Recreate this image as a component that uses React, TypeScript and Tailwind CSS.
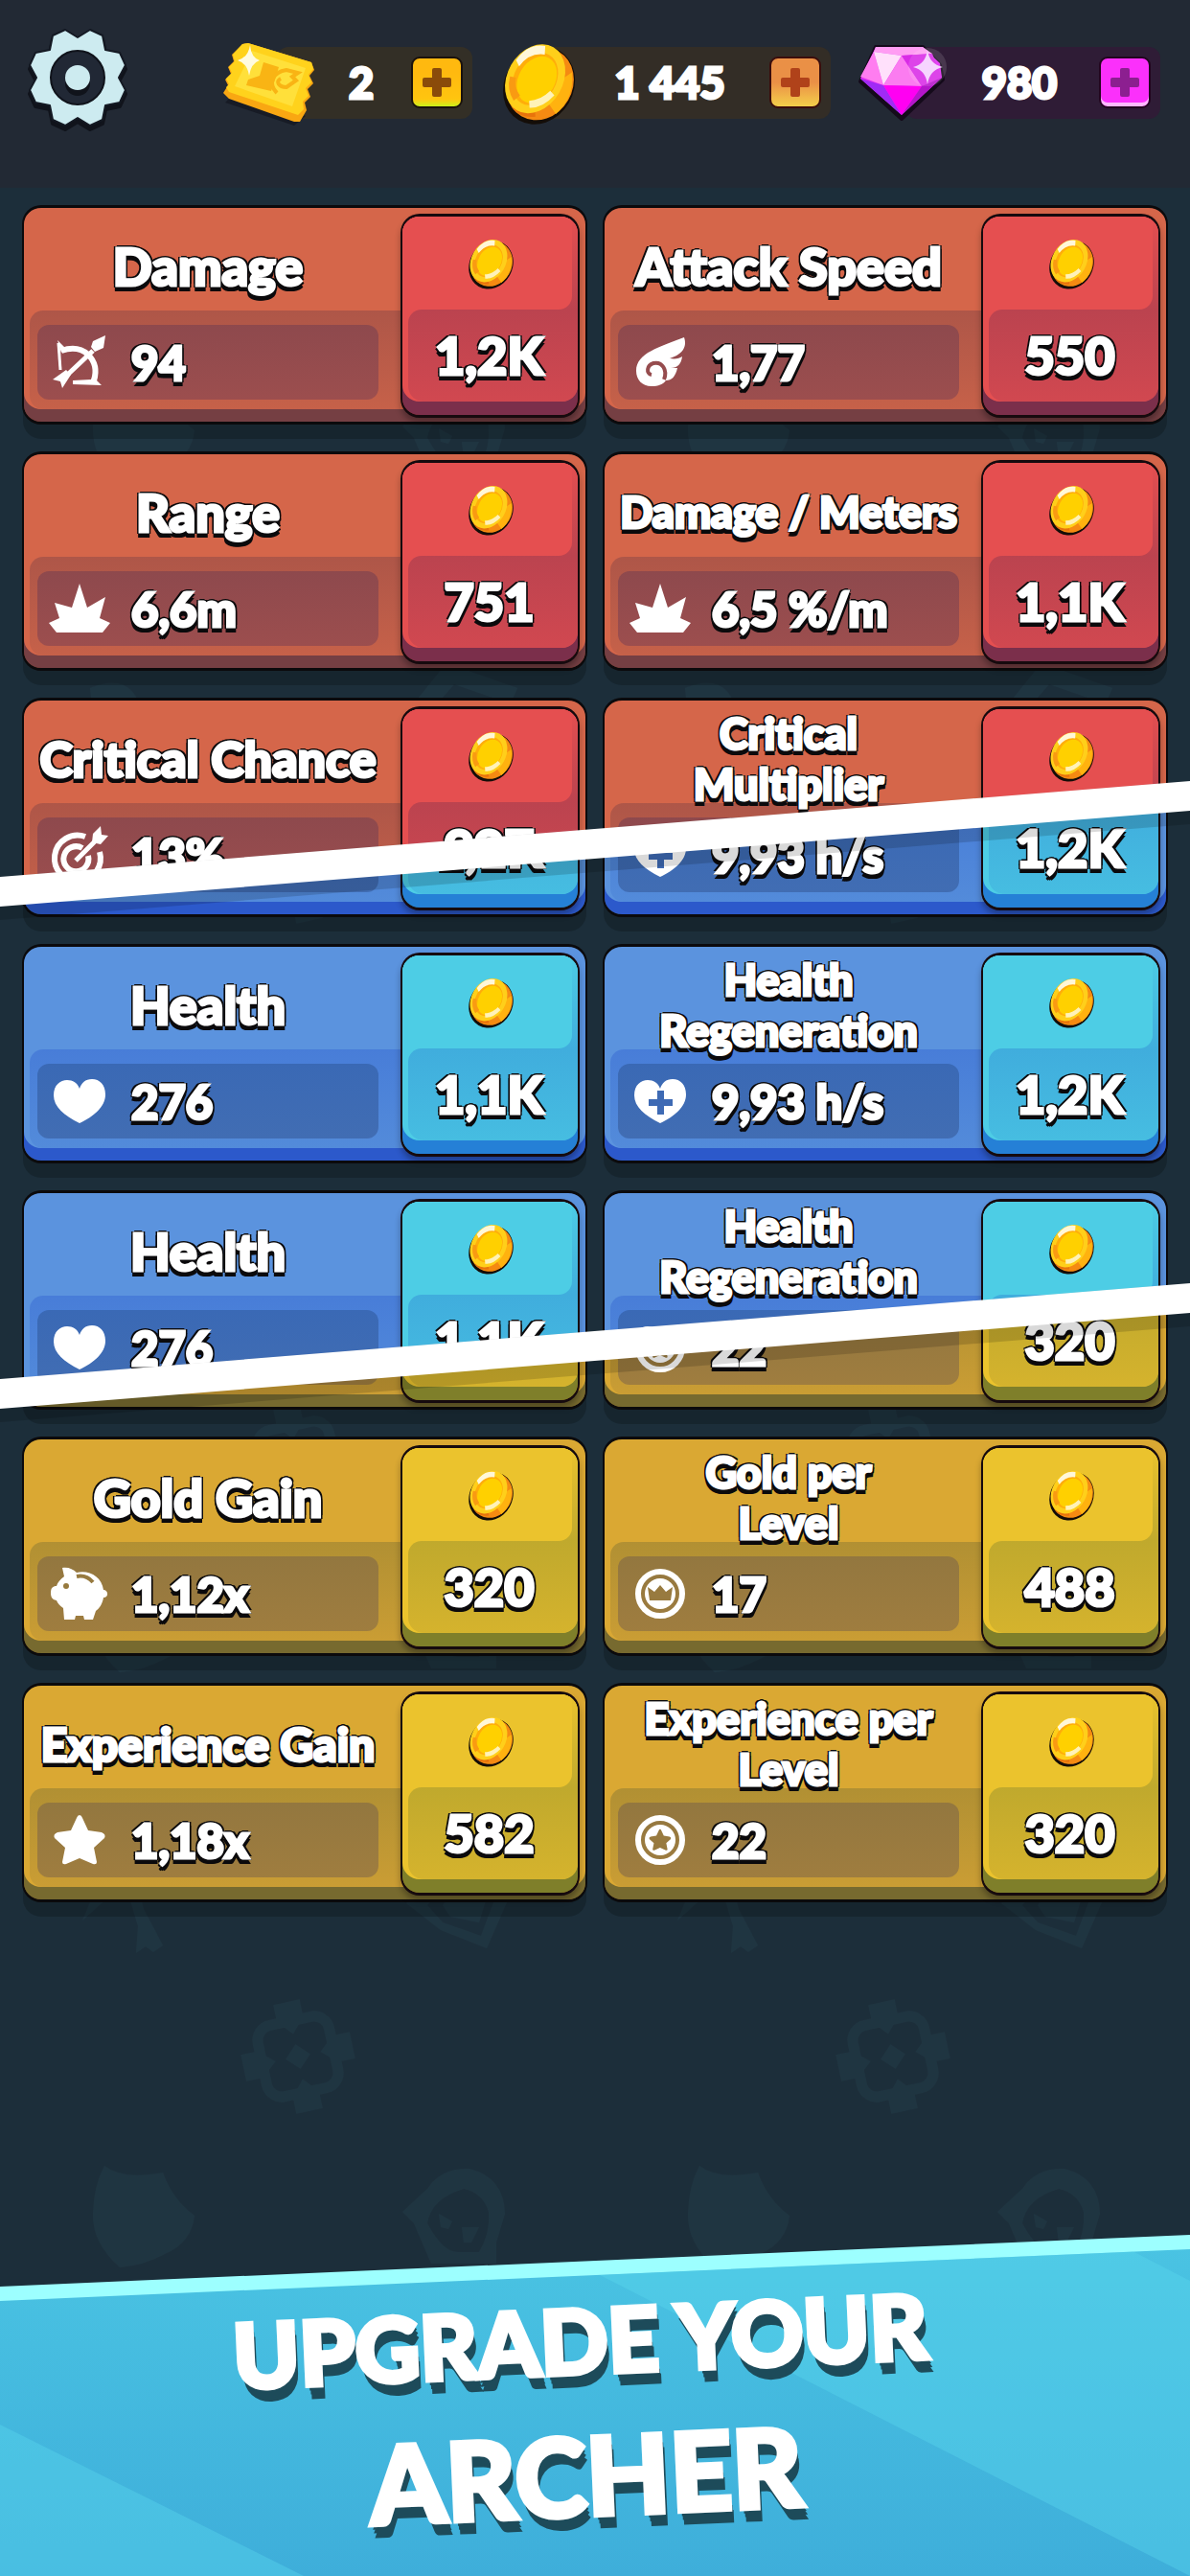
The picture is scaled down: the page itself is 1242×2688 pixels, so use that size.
import React from 'react';
import clsx from 'clsx';

type Tone = 'red' | 'blue' | 'gold';

interface Upgrade {
  title?: string;
  size?: string;
  icon: React.ReactNode;
  value?: string;
  price?: string;
}

// Chunky white lettering with a black outline that gets heavier towards the bottom
const OUTLINED =
  'text-white [-webkit-text-stroke:3px_white] [text-shadow:-3px_-2px_0_#0b0a0c,3px_-2px_0_#0b0a0c,0_-3px_0_#0b0a0c,-3px_2px_0_#0b0a0c,3px_2px_0_#0b0a0c,-2px_6px_0_#0b0a0c,2px_6px_0_#0b0a0c,0_6px_0_#0b0a0c]';

const TITLE_LG = 'text-[54px] leading-[53px]';
const TITLE_MD = 'text-[52px] leading-[53px]';
const TITLE_BASE = 'text-[48px] leading-[53px]';
const TITLE_SM = 'text-[45px] leading-[53px]';

const TONES = {
  red: {
    card: 'bg-[#d5664a] shadow-[inset_0_-13px_0_#753f43,0_16px_0_-1px_rgba(10,15,20,0.3)]',
    lower: 'from-[#ae5648] to-[#c66149]',
    stat: 'from-[#8e494d] to-[#9c4e4e]',
    button: 'bg-[#e54f50] shadow-[inset_0_-14px_0_#7b2f4b,0_5px_6px_rgba(0,0,0,0.3)]',
    top: 'bg-[#e54f50]',
    edge: 'from-[#e54f50] to-[#bb434f]',
    price: 'from-[#bb434f] to-[#d14850]',
  },
  blue: {
    card: 'bg-[#5b93de] shadow-[inset_0_-13px_0_#2c59cb,0_16px_0_-1px_rgba(10,15,20,0.3)]',
    lower: 'from-[#487dd8] to-[#538bda]',
    stat: 'from-[#3a69b5] to-[#416db3]',
    button: 'bg-[#4dcde5] shadow-[inset_0_-14px_0_#2580d6,0_5px_6px_rgba(0,0,0,0.3)]',
    top: 'bg-[#4dcde5]',
    edge: 'from-[#4dcde5] to-[#40addd]',
    price: 'from-[#40addd] to-[#46bde1]',
  },
  gold: {
    card: 'bg-[#daa833] shadow-[inset_0_-13px_0_#776a2f,0_16px_0_-1px_rgba(10,15,20,0.3)]',
    lower: 'from-[#b19033] to-[#ca9d34]',
    stat: 'from-[#93773f] to-[#9f7d3f]',
    button: 'bg-[#ebc32d] shadow-[inset_0_-14px_0_#7f7f2a,0_5px_6px_rgba(0,0,0,0.3)]',
    top: 'bg-[#ebc32d]',
    edge: 'from-[#ebc32d] to-[#c0a92d]',
    price: 'from-[#c0a92d] to-[#d5b32d]',
  },
};

const StatIcon = ({ children }: { children: React.ReactNode }) => (
  <svg className="h-[60px] w-[60px] shrink-0 overflow-visible" viewBox="0 0 60 60" fill="white" aria-hidden="true">
    {children}
  </svg>
);

const STAR = 'M30 4 Q32 4 33 7 L39 20 L53 22 Q58 24 56 28 L45 38 L48 53 Q48 56 44 55 L30 49 L16 55 Q12 56 12 53 L15 38 L4 28 Q2 24 7 22 L21 20 L27 7 Q28 4 30 4 Z';
const HEART = 'M30 53 C14 45 3 36 3 24 C3 13 10 8 17 8 C23 8 28 11 30 17 C32 11 36 7 43 7 C51 7 57 13 57 23 C57 36 45 46 30 53 Z';

const BowIcon = () => (
  <StatIcon>
    <path d="M7 7 L15 15 L11 20 Z M44 45 L53 54 L23 53 L23 49 L42 48 Z" />
    <path d="M11 18 Q28 12 39 22 Q50 33 45 49" fill="none" stroke="white" strokeWidth="6" />
    <path d="M8 10 L10 38" stroke="white" strokeWidth="3" />
    <path d="M10 50 L44 18" stroke="white" strokeWidth="5" />
    <path d="M44 8 L57 2 L55 15 L46 19 L42 14 Z M2 48 L16 38 L21 43 L12 57 L10 50 Z" />
  </StatIcon>
);

const WingIcon = () => (
  <StatIcon>
    <path d="M55 4 C58 13 55 21 40 26 C46 27 50 26 53 24 C52 32 48 36 41 36 L48 36 C46 45 42 49 36 49 C33 53 28 55 21 55 C11 55 5 48 5 39 C5 20 30 14 55 4 Z" />
    <path d="M21 43 C15 42 16 33 23 31 C32 29 38 38 34 48" fill="none" stroke="#964c4e" strokeWidth="4" />
  </StatIcon>
);

const LeafIcon = () => (
  <StatIcon>
    <path d="M30 4 L38 29 L57 18 L51 40 L62 45 L54 55 L6 55 L-2 45 L9 40 L4 24 L22 29 Z" />
  </StatIcon>
);

const TargetIcon = () => (
  <StatIcon>
    <g fill="none" stroke="white">
      <path d="M36 11 A24 24 0 1 0 51 27" strokeWidth="6" />
      <path d="M33 23 A13 13 0 1 0 39 31" strokeWidth="6" />
      <path d="M26 36 L50 12" strokeWidth="5" />
    </g>
    <path d="M44 8 L52 0 L53 9 L60 10 L52 19 L43 17 Z" />
  </StatIcon>
);

const HeartIcon = () => (
  <StatIcon>
    <path d={HEART} />
  </StatIcon>
);

const HeartPlusIcon = () => (
  <StatIcon>
    <path d={HEART} />
    <path d="M27 19 h7 v9 h9 v7 h-9 v9 h-7 v-9 h-9 v-7 h9 Z" fill="#3e6ab4" />
  </StatIcon>
);

const PiggyIcon = () => (
  <StatIcon>
    <path d="M12 3 C18 2 23 4 27 8 C40 5 53 12 55 26 C60 26 61 34 55 34 C54 41 50 46 47 48 L44 57 H35 L34 53 H26 L25 57 H14 L13 45 C9 42 7 40 6 37 C1 36 0 33 0 29 C0 24 2 22 6 22 C7 18 10 15 14 12 Z" />
    <path d="M27 12 Q37 10 44 18" fill="none" stroke="#977a3f" strokeWidth="4" />
    <circle cx="16" cy="22" r="3" fill="#977a3f" />
  </StatIcon>
);

const StarIcon = () => (
  <StatIcon>
    <path d={STAR} />
  </StatIcon>
);

const CrownCoinIcon = () => (
  <StatIcon>
    <circle cx="30" cy="30" r="23" fill="none" stroke="white" strokeWidth="6" />
    <circle cx="30" cy="30" r="16" />
    <path d="M17 23 L24 28 L30 21 L36 28 L43 23 L41 37 H19 Z" fill="#987a3f" />
  </StatIcon>
);

const StarCoinIcon = () => (
  <StatIcon>
    <circle cx="30" cy="30" r="23" fill="none" stroke="white" strokeWidth="6" />
    <circle cx="30" cy="30" r="16" />
    <path d={STAR} fill="#987a3f" transform="translate(17 17) scale(.43)" />
  </StatIcon>
);

const Coin = ({ className }: { className: string }) => (
  <svg className={clsx('shrink-0 overflow-visible', className)} viewBox="0 0 76 78" aria-hidden="true">
    <g transform="rotate(30 38 39)">
      <ellipse cx="41" cy="41" rx="36" ry="42" fill="#140d08" />
      <ellipse cx="41" cy="39" rx="34" ry="39" fill="#f58a12" />
      <path d="M64 12 Q80 34 71 58 L54 50 L58 24 Z" fill="#ffb20f" />
      <path d="M30 76 Q42 80 54 71 L46 60 L28 64 Z" fill="#e8730c" />
      <ellipse cx="34" cy="37" rx="29" ry="38" fill="#ffcf1a" />
      <ellipse cx="34" cy="37" rx="22" ry="29" fill="#ffad0a" />
      <ellipse cx="36" cy="37" rx="19" ry="26" fill="#ffd000" />
      <path d="M7 30 Q9 8 26 2 L30 10 Q15 16 13 34 Z" fill="#fff7d8" />
      <path d="M44 66 Q56 60 60 42 L54 40 Q50 54 40 60 Z" fill="#fff2b8" />
      <path d="M10 48 Q14 62 26 68 L29 60 Q19 56 16 46 Z" fill="#f99a12" />
    </g>
  </svg>
);

const Ticket = () => (
  <svg className="h-[86px] w-[96px] shrink-0 overflow-visible" viewBox="0 0 96 86" aria-hidden="true">
    <path d="M2 64 L74 88 L86 78 L8 58 Z" fill="#12161f" opacity=".7" />
    <path d="M20 3 L26 2 L92 22 L95 30 L90 36 L94 44 L88 50 L91 58 L85 64 L87 72 L80 84 L74 84 L6 60 L0 54 L5 46 L2 40 L8 34 L5 27 L11 21 L9 14 Z" fill="#f9a712" />
    <path d="M20 3 L26 2 L92 22 L94 29 L89 35 L92 43 L86 49 L89 57 L83 63 L84 71 L78 77 L6 53 L3 48 L6 45 L3 39 L9 33 L6 27 L12 21 L10 14 Z" fill="#ffd21c" />
    <path d="M30 10 L86 28 L72 68 L12 47 Z" fill="#ffe03a" />
    <path d="M42 22 L58 27 L54 40 L50 52 L24 46 L26 40 L38 36 Z" fill="#f9b414" />
    <path d="M56 54 C46 44 52 32 66 30 L78 33 L72 37 L76 41 L66 48 C58 48 54 42 60 39" fill="none" stroke="#f9b414" strokeWidth="4" />
    <path d="M28 4 Q29 17 38 20 Q29 23 27 36 Q25 23 15 20 Q26 17 28 4 Z" fill="#fffbe0" />
  </svg>
);

const Gem = () => (
  <svg className="h-[76px] w-[88px] shrink-0 overflow-visible" viewBox="0 0 88 76" aria-hidden="true">
    <path d="M17 1 L66 1 L84 20 L87 35 L44 76 L1 37 Z" fill="#140a1a" stroke="#140a1a" strokeWidth="4" strokeLinejoin="round" />
    <path d="M17 1 L66 1 L84 18 L86 33 L44 72 L1 34 Z" fill="#e22cf5" />
    <path d="M17 1 L66 1 L76 8 L44 10 L15 6 Z" fill="#ff9df3" />
    <path d="M15 6 L1 32 L25 41 Z" fill="#ff7df0" />
    <path d="M15 6 L44 10 L25 41 Z" fill="#ffe0fb" />
    <path d="M44 10 L25 41 L65 42 Z" fill="#fb7cf0" />
    <path d="M44 10 L76 8 L86 33 L65 42 Z" fill="#d92be6" />
    <path d="M1 34 L25 41 L44 72 Z" fill="#a02bf5" />
    <path d="M25 41 L65 42 L44 72 Z" fill="#ff00f2" />
    <path d="M65 42 L86 33 L44 72 Z" fill="#b416c9" />
    <circle cx="71" cy="22" r="20" fill="#ffffff" opacity=".12" />
    <path d="M71 4 Q73 19 87 22 Q73 25 71 40 Q69 25 56 22 Q69 19 71 4 Z" fill="#f6d4ff" />
  </svg>
);

const GearIcon = () => (
  <svg className="h-[100px] w-[100px] overflow-visible" viewBox="0 0 100 100" aria-hidden="true">
    {['#10131b', '#cdebf0'].map((color, i) => (
      <path
        key={color}
        transform={i === 0 ? 'translate(0 4)' : undefined}
        d="M50 8 L63 0 L76 6 L79 21 L94 24 L100 37 L93 50 L100 63 L94 76 L79 79 L76 94 L63 100 L50 92 L37 100 L24 94 L21 79 L6 76 L0 63 L7 50 L0 37 L6 24 L21 21 L24 6 L37 0 Z"
        fill={color}
        stroke={i === 0 ? '#10131b' : '#141923'}
        strokeWidth={i === 0 ? 4 : 2}
        strokeLinejoin="round"
      />
    ))}
    <circle cx="50" cy="50" r="28" fill="#212835" stroke="#10131b" strokeWidth="2" />
    <circle cx="50" cy="56" r="13" fill="#10131b" />
    <circle cx="50" cy="50" r="13" fill="#cdebf0" />
  </svg>
);

const PlusIcon = () => (
  <svg className="h-[30px] w-[30px]" viewBox="0 0 30 30" fill="currentColor" aria-hidden="true">
    <rect x="10" y="0" width="10" height="30" rx="2" />
    <rect x="0" y="10" width="30" height="10" rx="2" />
  </svg>
);

interface CurrencyProps {
  label: string;
  amount: string;
  icon: React.ReactNode;
  width: string;
  pill: string;
  button: string;
}

const Currency = ({ label, amount, icon, width, pill, button }: CurrencyProps) => (
  <div className={clsx('flex items-center', width)}>
    <div className="z-10 shrink-0">{icon}</div>
    <div className={clsx('-ml-10 flex h-[75px] flex-1 items-center rounded-xl pl-9 pr-[10px]', pill)}>
      <span className="flex-1 text-center text-[45px] leading-none text-white [-webkit-text-stroke:3px_white]">{amount}</span>
      <button
        type="button"
        aria-label={`Buy ${label}`}
        className={clsx('flex h-[54px] w-[54px] items-center justify-center rounded-[9px] border-2', button)}
      >
        <PlusIcon />
      </button>
    </div>
  </div>
);

const UpgradeCard = ({ tone, upgrade }: { tone: Tone; upgrade: Upgrade }) => {
  const t = TONES[tone];
  return (
    <article className={clsx('flex h-[229px] rounded-[20px] border-2 border-y-[3px] border-[#0b0a0c] pr-[6px]', t.card)}>
      <div className="flex min-w-0 flex-1 flex-col pb-[13px] pl-[6px]">
        <div className="z-10 mr-[23px] flex h-[107px] items-center justify-center pl-2 pt-[14px]">
          {upgrade.title && (
            <h2 className={clsx('whitespace-pre text-center', OUTLINED, upgrade.size)}>{upgrade.title}</h2>
          )}
        </div>
        <div className={clsx('flex-1 rounded-l-[14px] bg-linear-to-b pl-2 pr-[23px] pt-[15px]', t.lower)}>
          <div className={clsx('flex h-[78px] items-center gap-6 rounded-xl bg-linear-to-b pl-[14px]', t.stat)}>
            {upgrade.icon}
            {upgrade.value && (
              <span className={clsx('whitespace-nowrap text-[49px] leading-none', OUTLINED)}>{upgrade.value}</span>
            )}
          </div>
        </div>
      </div>
      <button
        type="button"
        aria-label={upgrade.title ? `Upgrade ${upgrade.title}` : 'Upgrade'}
        className={clsx(
          'mb-1 mt-[6px] flex w-[187px] shrink-0 flex-col overflow-hidden rounded-[20px] border-2 border-y-[3px] border-[#160a0e] pb-[14px]',
          t.button,
        )}
      >
        <span className={clsx('w-full flex-1 bg-linear-to-b pr-[6px]', t.edge)}>
          <span className={clsx('flex h-full items-center justify-center rounded-br-[14px] pl-[6px]', t.top)}>
            <Coin className="h-[49px] w-[47px]" />
          </span>
        </span>
        <span className="w-full flex-1 pl-[6px]">
          <span
            className={clsx(
              'flex h-full items-center justify-center rounded-b-[16px] rounded-tl-[14px] bg-linear-to-b pr-[8px] text-[54px] leading-none',
              OUTLINED,
              t.price,
            )}
          >
            {upgrade.price}
          </span>
        </span>
      </button>
    </article>
  );
};

const CardRow = ({ tone, items }: { tone: Tone; items: Upgrade[] }) => (
  <div className="grid grid-cols-2 gap-4 px-[23px]">
    {items.map((item, index) => (
      <UpgradeCard key={index} tone={tone} upgrade={item} />
    ))}
  </div>
);

const damage: Upgrade = { title: 'Damage', size: TITLE_LG, icon: <BowIcon />, value: '94', price: '1,2K' };
const attackSpeed: Upgrade = { title: 'Attack Speed', size: TITLE_LG, icon: <WingIcon />, value: '1,77', price: '550' };
const range: Upgrade = { title: 'Range', size: TITLE_LG, icon: <LeafIcon />, value: '6,6m', price: '751' };
const perMeter: Upgrade = { title: 'Damage / Meters', size: TITLE_SM, icon: <LeafIcon />, value: '6,5 %/m', price: '1,1K' };
const critChance: Upgrade = { title: 'Critical Chance', size: TITLE_MD, icon: <TargetIcon />, value: '13%', price: '997' };
const critMultiplier: Upgrade = { title: 'Critical\nMultiplier', size: TITLE_SM, icon: <TargetIcon /> };
const health: Upgrade = { title: 'Health', size: TITLE_LG, icon: <HeartIcon />, value: '276', price: '1,1K' };
const regeneration: Upgrade = { title: 'Health\nRegeneration', size: TITLE_SM, icon: <HeartPlusIcon />, value: '9,93 h/s', price: '1,2K' };
const goldGain: Upgrade = { title: 'Gold Gain', size: TITLE_LG, icon: <PiggyIcon />, value: '1,12x', price: '320' };
const goldPerLevel: Upgrade = { title: 'Gold per\nLevel', size: TITLE_SM, icon: <CrownCoinIcon />, value: '17', price: '488' };
const expGain: Upgrade = { title: 'Experience Gain', size: TITLE_BASE, icon: <StarIcon />, value: '1,18x', price: '582' };
const expPerLevel: Upgrade = { title: 'Experience per\nLevel', size: TITLE_SM, icon: <StarCoinIcon />, value: '22', price: '320' };

interface SplitRowProps {
  upper: React.ReactNode;
  lower: React.ReactNode;
  upperClip: string;
  lowerClip: string;
  band: string;
}

// One row cut by a slanted white band, with the next category showing under it
const SplitRow = ({ upper, lower, upperClip, lowerClip, band }: SplitRowProps) => (
  <div className="relative">
    <div className={upperClip}>{upper}</div>
    <div className={clsx('absolute inset-0', lowerClip)} inert>
      {lower}
    </div>
    <div className={clsx('absolute inset-x-0 h-[145px] bg-black/15 [clip-path:polygon(0_100px,100%_0,100%_45px,0_145px)]', band)} />
    <div className={clsx('absolute inset-x-0 h-[131px] bg-white [clip-path:polygon(0_100px,100%_0,100%_31px,0_131px)]', band)} />
  </div>
);

const Backdrop = () => (
  <svg className="absolute inset-0 h-full w-full" aria-hidden="true">
    <defs>
      <pattern id="doodles" x="0" y="37" width="621" height="621" patternUnits="userSpaceOnUse" fill="#1f3541">
        <g transform="translate(311 246) rotate(-12)">
          <rect x="-38" y="-38" width="76" height="76" rx="16" fill="none" stroke="#1f3541" strokeWidth="11" />
          <path d="M-14 -58 H14 V-40 L0 -24 L-14 -40 Z M-14 58 H14 V40 L0 24 L-14 40 Z M-58 -14 V14 H-40 L-24 0 L-40 -14 Z M58 -14 V14 H40 L24 0 L40 -14 Z M0 -13 L13 0 L0 13 L-13 0 Z" />
        </g>
        <path d="M109 360 Q128 375 170 367 Q180 395 203 412 Q200 440 172 452 Q150 464 125 466 Q96 440 97 410 Q98 380 109 360 Z" />
        <path
          fillRule="evenodd"
          d="M420 408 L446 384 Q460 362 490 363 Q526 372 527 410 L518 440 L518 462 L450 462 L432 420 Z M484 384 Q450 394 446 420 Q462 450 478 450 L500 450 Q512 430 510 408 Q504 388 484 384 Z M458 410 L472 418 L468 426 L460 424 Z M482 424 L500 424 L492 440 L484 440 Z"
        />
        <path d="M94 60 Q140 40 150 92 L170 130 L160 137 L152 131 L142 138 L144 110 L132 70 L106 86 L86 104 L96 80 Z" />
        <path d="M424 86 L466 34 L540 60 L508 133 L460 114 Z M446 88 L462 106 L502 120 L520 72 L474 56 Z" fillRule="evenodd" />
        <path d="M462 88 L478 70 L508 80 L500 106 L470 100 Z" />
      </pattern>
    </defs>
    <rect width="100%" height="100%" fill="url(#doodles)" />
  </svg>
);

const App: React.FC = () => (
  <div className="relative flex min-h-screen flex-col overflow-hidden bg-[#1c2e3a] font-['Lato','Noto_Sans',sans-serif] font-black">
    <Backdrop />

    {/* Top bar */}
    <header className="relative flex h-[196px] items-start justify-between bg-[#222934] px-[31px] pt-[31px]">
      <button type="button" aria-label="Settings">
        <GearIcon />
      </button>
      <div className="flex items-center gap-[30px] pt-[12px]">
        <Currency
          label="tickets"
          amount="2"
          icon={<Ticket />}
          width="w-[260px]"
          pill="bg-[#332f26]"
          button="border-[#1a120c] bg-linear-to-b from-[#ffb90f] from-30% via-[#ffc50f] via-85% to-[#c8f01a] text-[#8a4b0a]"
        />
        <Currency
          label="coins"
          amount="1 445"
          icon={<Coin className="h-[78px] w-[76px]" />}
          width="w-[344px]"
          pill="bg-[#332d26]"
          button="border-[#3a0d0c] bg-linear-to-b from-[#ea9046] from-50% to-[#f3cf4a] text-[#b0421a]"
        />
        <Currency
          label="gems"
          amount="980"
          icon={<Gem />}
          width="w-[314px]"
          pill="bg-[#2f1c36]"
          button="border-[#22061f] bg-[#fb30fb] text-[#8c1f90] shadow-[inset_0_-4px_0_#ffb8ff]"
        />
      </div>
    </header>

    {/* Upgrades */}
    <main className="relative flex flex-col gap-7 pb-[60px] pt-[18px]">
      <CardRow tone="red" items={[damage, attackSpeed]} />
      <CardRow tone="red" items={[range, perMeter]} />
      <SplitRow
        upper={<CardRow tone="red" items={[critChance, critMultiplier]} />}
        lower={
          <CardRow
            tone="blue"
            items={[
              { icon: <HeartIcon />, price: '1,1K' },
              { icon: <HeartPlusIcon />, value: '9,93 h/s', price: '1,2K' },
            ]}
          />
        }
        upperClip="[clip-path:polygon(0_0,100%_0,100%_102px,0_202px)]"
        lowerClip="[clip-path:polygon(0_202px,100%_102px,100%_250px,0_250px)]"
        band="top-[87px]"
      />
      <CardRow tone="blue" items={[health, regeneration]} />
      <SplitRow
        upper={
          <CardRow
            tone="blue"
            items={[health, { title: regeneration.title, size: regeneration.size, icon: <HeartPlusIcon /> }]}
          />
        }
        lower={
          <CardRow
            tone="gold"
            items={[{ icon: <StarIcon /> }, { icon: <StarCoinIcon />, value: '22', price: '320' }]}
          />
        }
        upperClip="[clip-path:polygon(0_0,100%_0,100%_112px,0_212px)]"
        lowerClip="[clip-path:polygon(0_212px,100%_112px,100%_250px,0_250px)]"
        band="top-[97px]"
      />
      <CardRow tone="gold" items={[goldGain, goldPerLevel]} />
      <CardRow tone="gold" items={[expGain, expPerLevel]} />
    </main>

    {/* Banner */}
    <footer className="relative mt-auto bg-[#9dffff] [clip-path:polygon(0_54px,100%_0,100%_100%,0_100%)]">
      <div className="relative flex h-[356px] flex-col items-center bg-linear-to-b from-[#4ac4e3] to-[#3eaeda] pr-6 pt-[42px] [clip-path:polygon(0_69px,100%_15px,100%_100%,0_100%)]">
        <svg className="absolute inset-0 h-full w-full" viewBox="0 0 1242 356" preserveAspectRatio="none" fill="#5ad8ee" aria-hidden="true">
          <path d="M0 198 L317 356 H0 Z" opacity=".4" />
          <path d="M626 42 L1180 16 L1242 48 V356 Z" opacity=".4" />
        </svg>
        <p className="relative flex rotate-[-2.5deg] flex-col items-center text-white [-webkit-text-stroke:5px_white] [text-shadow:4px_14px_0_#1d4b5a,3px_9px_0_#1d4b5a,2px_5px_0_#1d4b5a]">
          <span className="whitespace-nowrap text-[93px] leading-[134px]">UPGRADE YOUR</span>
          <span className="text-[113px] leading-[146px]">ARCHER</span>
        </p>
      </div>
    </footer>
  </div>
);

export default App;
